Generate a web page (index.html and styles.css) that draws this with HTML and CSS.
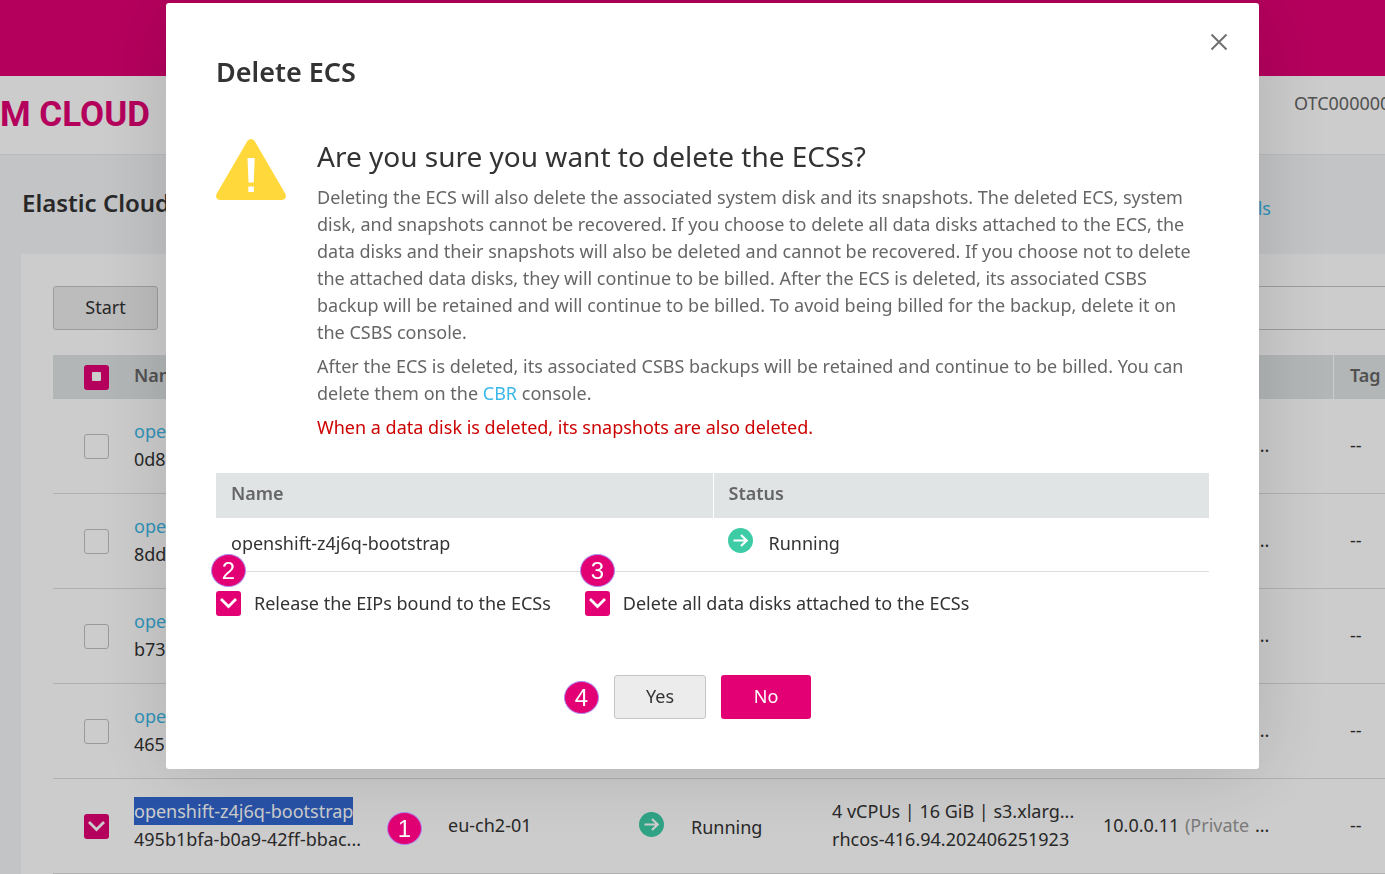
FILE: index.html
```html
<!DOCTYPE html>
<html lang="en">
<head>
<meta charset="utf-8">
<title>Elastic Cloud Server</title>
<link rel="stylesheet" href="styles.css">
</head>
<body>
<svg class="defs" aria-hidden="true">
  <symbol id="running" viewBox="0 0 25 25">
    <circle cx="12.500" cy="12.500" r="12.500" fill="#3dcca6"/>
    <path d="M5.500 12.500H18M13 7l5.700 5.500L13 18" fill="none" stroke="#fff" stroke-width="2.200"/>
  </symbol>
</svg>
<div class="page">
  <div class="brandbar"></div>
  <header class="header">
    <div class="logo">M CLOUD</div>
    <div class="account">OTC000000</div>
  </header>
  <div class="titlebar">
    <h1>Elastic Cloud Server</h1>
    <a href="#">Details</a>
  </div>
  <main class="panel">
    <div class="tools">
      <button class="btn start">Start</button>
      <input class="search" type="text" aria-label="Search">
    </div>
    <table class="servers">
      <colgroup><col class="c-check"><col class="c-name"><col class="c-zone"><col class="c-status"><col class="c-spec"><col class="c-ip"><col></colgroup>
      <thead>
        <tr><th class="pick"><input type="checkbox" class="check some" aria-label="Select all"></th><th>Name</th><th></th><th></th><th></th><th></th><th class="tag">Tag</th></tr>
      </thead>
      <tbody>
        <tr><td class="pick"><input type="checkbox" class="check" aria-label="Select server 0d8"></td><td><a href="#">openshift</a><br>0d8</td><td></td><td></td><td></td><td>10.0.0.11 <span class="muted">(Private</span> ...</td><td>--</td></tr>
        <tr><td class="pick"><input type="checkbox" class="check" aria-label="Select server 8dd"></td><td><a href="#">openshift</a><br>8dd</td><td></td><td></td><td></td><td>10.0.0.11 <span class="muted">(Private</span> ...</td><td>--</td></tr>
        <tr><td class="pick"><input type="checkbox" class="check" aria-label="Select server b73"></td><td><a href="#">openshift</a><br>b73</td><td></td><td></td><td></td><td>10.0.0.11 <span class="muted">(Private</span> ...</td><td>--</td></tr>
        <tr><td class="pick"><input type="checkbox" class="check" aria-label="Select server 465"></td><td><a href="#">openshift</a><br>465</td><td></td><td></td><td></td><td>10.0.0.11 <span class="muted">(Private</span> ...</td><td>--</td></tr>
        <tr><td class="pick"><input type="checkbox" class="check" checked aria-label="Select openshift-z4j6q-bootstrap"></td><td><a href="#" class="selected">openshift-z4j6q-bootstrap</a><br>495b1bfa-b0a9-42ff-bbac...</td><td>eu-ch2-01</td><td><span class="status"><svg><use href="#running"/></svg><span>Running</span></span></td><td>4 vCPUs | 16 GiB | s3.xlarg...<br>rhcos-416.94.202406251923</td><td>10.0.0.11 <span class="muted">(Private</span> ...</td><td>--</td></tr>
      </tbody>
    </table>
  </main>
</div>

<div class="overlay">
  <span class="marker m1">1</span>
  <section class="dialog" role="dialog" aria-labelledby="dialog-title">
    <button class="close" aria-label="Close"><svg viewBox="0 0 18 18"><path d="M1.500 1.500l15 15M16.500 1.500l-15 15" stroke="#707070" stroke-width="2" fill="none"/></svg></button>
    <h2 id="dialog-title">Delete ECS</h2>
    <div class="warning">
      <svg class="triangle" viewBox="0 0 70 61"><path d="M31.500 1.800Q35-1.600 38.500 1.800L69.200 54.500Q71.500 60 66 61H4Q-1.500 60 .800 54.500Z" fill="#ffd83b"/><path d="M31.500 19h7.200l-1 24.500h-5.200zM32.300 47.500h5.600V53h-5.600z" fill="#fff"/></svg>
      <div class="message">
        <h3>Are you sure you want to delete the ECSs?</h3>
        <p>Deleting the ECS will also delete the associated system disk and its snapshots. The deleted ECS, system disk, and snapshots cannot be recovered. If you choose to delete all data disks attached to the ECS, the data disks and their snapshots will also be deleted and cannot be recovered. If you choose not to delete the attached data disks, they will continue to be billed. After the ECS is deleted, its associated CSBS backup will be retained and will continue to be billed. To avoid being billed for the backup, delete it on the CSBS console.</p>
        <p>After the ECS is deleted, its associated CSBS backups will be retained and continue to be billed. You can delete them on the <a href="#">CBR</a> console.</p>
        <p class="alert">When a data disk is deleted, its snapshots are also deleted.</p>
      </div>
    </div>
    <table class="targets">
      <thead><tr><th>Name</th><th>Status</th></tr></thead>
      <tbody><tr><td>openshift-z4j6q-bootstrap</td><td><span class="status"><svg><use href="#running"/></svg><span>Running</span></span></td></tr></tbody>
    </table>
    <div class="options">
      <label><span class="marker above">2</span><input type="checkbox" class="check" checked>Release the EIPs bound to the ECSs</label>
      <label><span class="marker above">3</span><input type="checkbox" class="check" checked>Delete all data disks attached to the ECSs</label>
    </div>
    <div class="actions">
      <span class="marker">4</span>
      <button class="btn yes">Yes</button>
      <button class="btn no">No</button>
    </div>
  </section>
</div>
</body>
</html>
```

FILE: styles.css
```css
* { box-sizing: border-box; }
body {
  margin: 0;
  font: 18px/28px "Noto Sans", sans-serif;
  color: #333;
  background: #fff;
}
h1, h2, h3, p { margin: 0; }
a { color: #3bb8e8; text-decoration: none; }
button, input { font: inherit; color: inherit; }
.defs { position: absolute; width: 0; height: 0; }

.page {
  display: flex;
  flex-direction: column;
  height: 100vh;
  overflow: hidden;
  background: #f4f5f8;
}
.brandbar { flex: none; height: 76px; background: #e20074; }
.header {
  flex: none;
  display: flex;
  justify-content: space-between;
  height: 79px;
  background: #fff;
  border-bottom: 1px solid #e8e9ea;
}
.logo { font: bold 35px/78px Roboto, sans-serif; color: #e20074; }
.account { width: 91px; padding-top: 13px; overflow: hidden; color: #666; }
.titlebar {
  flex: none;
  display: flex;
  justify-content: space-between;
  align-items: center;
  height: 99px;
  padding: 0 114px 0 22px;
}
.titlebar h1 { padding-bottom: 4px; font-size: 24px; font-weight: 600; }
.titlebar a { padding-top: 6px; }
.panel { flex: 1; margin-left: 21px; padding: 32px 0 0 32px; background: #fff; }
.tools { display: flex; gap: 400px; margin-bottom: 25px; }
.btn {
  height: 44px;
  padding: 0 0 2px;
  border: 1px solid #c5c5c5;
  border-radius: 3px;
  background: #ececec;
}
.start { flex: none; width: 105px; }
.search { flex: 1; min-width: 0; border: 1px solid #c5c5c5; border-right: 0; }

.check {
  appearance: none;
  display: block;
  flex: none;
  width: 25px;
  height: 25px;
  margin: 0;
  border: 1px solid #c2c2c2;
  border-radius: 3px;
  background: #fff;
}
.check:checked, .some {
  border: 0;
  background: #e20074 url("data:image/svg+xml,%3Csvg xmlns='http://www.w3.org/2000/svg' viewBox='0 0 25 25'%3E%3Cpath d='M5 8l7.500 7.500 7.500-7.500' fill='none' stroke='white' stroke-width='2.800'/%3E%3C/svg%3E");
}
.some { background-image: url("data:image/svg+xml,%3Csvg xmlns='http://www.w3.org/2000/svg' viewBox='0 0 25 25'%3E%3Crect x='8' y='7' width='9' height='9' rx='1' fill='white'/%3E%3C/svg%3E"); }

table { width: 100%; border-collapse: separate; border-spacing: 0; table-layout: fixed; }
th { height: 44px; padding: 0 16px; text-align: left; font-weight: 600; color: #666; background: #e0e4e5; }
td { padding: 0 16px; border-bottom: 1px solid #ddd; }
.servers td { height: 95px; padding-bottom: 3px; white-space: nowrap; }
.servers th { padding-bottom: 4px; }
.servers .pick { padding: 0 0 0 31px; }
.servers .tag { border-left: 1px solid #fff; }
.servers td:last-child { padding-left: 17px; }
.c-check { width: 65px; }
.c-name { width: 314px; }
.c-zone { width: 191px; }
.c-status { width: 193px; }
.c-spec { width: 271px; }
.c-ip { width: 246px; }
.muted { margin: 0 1px; color: #999; }
.selected { display: inline-block; color: #fff; background: #3267d1; }
.status { display: flex; align-items: center; gap: 16px; }
.servers .status { gap: 27px; }
.status svg { flex: none; width: 25px; height: 25px; }
.status span { padding-top: 4px; }

.overlay {
  position: fixed;
  inset: 0;
  padding: 3px 126px 0 166px;
  background: rgba(0, 0, 0, .2);
}
.dialog {
  position: relative;
  padding: 53px 50px 50px;
  border-radius: 3px;
  background: #fff;
  box-shadow: 0 0 80px rgba(0, 0, 0, .15);
}
.close { position: absolute; top: 30px; right: 31px; width: 18px; height: 18px; padding: 0; border: 0; background: none; }
.close svg { display: block; }
.dialog h2 { font-size: 27px; line-height: 32px; font-weight: 600; }
.warning { display: flex; gap: 31px; margin-top: 48px; }
.triangle { flex: none; width: 70px; height: 61px; margin-top: 3px; }
.message { flex: 1; padding-right: 4px; color: #666; }
.message h3 { margin-bottom: 8px; font-size: 28px; line-height: 40px; font-weight: 400; color: #333; }
.message p { margin-bottom: 7px; line-height: 27px; }
.message .alert { margin: 0; color: #c00; }
.targets { margin-top: 32px; }
.targets th { height: 45px; padding: 0 15px 6px; }
.targets th + th { border-left: 1px solid #fff; }
.targets td { height: 54px; padding: 0 15px 4px; }
.targets td:last-child { padding-bottom: 8px; }
.options { display: flex; gap: 34px; margin-top: 17px; }
.options label { position: relative; display: flex; align-items: center; gap: 13px; }
.actions { display: flex; justify-content: center; align-items: center; gap: 15px; margin: 58px 50px 0 0; }
.yes { width: 92px; }
.no { width: 90px; border: 0; color: #fff; background: #e20074; }
.marker {
  width: 35px;
  height: 33px;
  border: 1px solid #b18cf0;
  border-radius: 50%;
  text-align: center;
  font: 24px/31px "Liberation Sans", sans-serif;
  color: #fff;
  background: #e20074;
}
.above { position: absolute; left: -5px; top: -35px; }
.m1 { position: absolute; left: 387px; top: 812px; }
```
